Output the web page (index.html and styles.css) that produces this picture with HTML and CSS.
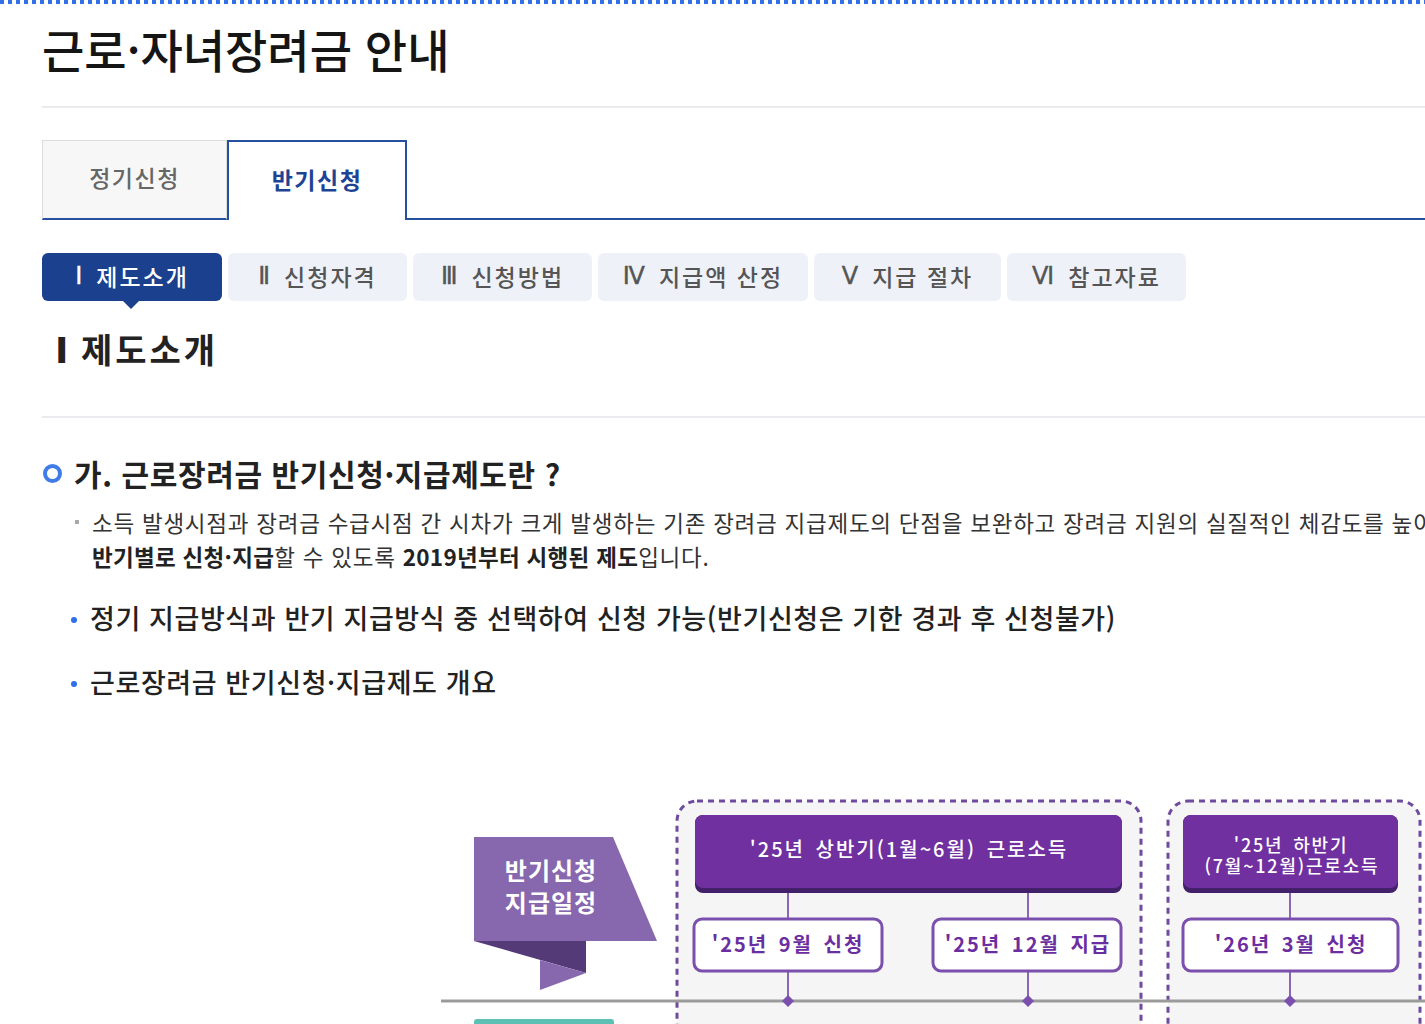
FILE: index.html
```html
<!DOCTYPE html>
<html lang="ko">
<head>
<meta charset="utf-8">
<title>근로·자녀장려금 안내</title>
<link rel="stylesheet" href="styles.css">
</head>
<body>
<div class="topbar"></div>
<div class="page">
  <h1 class="title">근로·자녀장려금 안내</h1>

  <div class="tabs">
    <a class="tab">정기신청</a>
    <a class="tab active">반기신청</a>
    <div class="tab-rest"></div>
  </div>

  <div class="subtabs">
    <a class="subtab active"><span class="num">Ⅰ</span> 제도소개</a>
    <a class="subtab"><span class="num">Ⅱ</span> 신청자격</a>
    <a class="subtab"><span class="num">Ⅲ</span> 신청방법</a>
    <a class="subtab"><span class="num">Ⅳ</span> 지급액 산정</a>
    <a class="subtab"><span class="num">Ⅴ</span> 지급 절차</a>
    <a class="subtab"><span class="num">Ⅵ</span> 참고자료</a>
  </div>

  <h2 class="section-title"><span class="num">Ⅰ</span> 제도소개</h2>

  <h3 class="q-title"><span class="ring"></span>가. 근로장려금 반기신청·지급제도란 ?</h3>
  <p class="desc"><span class="sq"></span>소득 발생시점과 장려금 수급시점 간 시차가 크게 발생하는 기존 장려금 지급제도의 단점을 보완하고 장려금 지원의 실질적인 체감도를 높이기 위해<br><b>반기별로 신청·지급</b>할 수 있도록 <b>2019년부터 시행된 제도</b>입니다.</p>

  <ul class="bullets">
    <li>정기 지급방식과 반기 지급방식 중 선택하여 신청 가능(반기신청은 기한 경과 후 신청불가)</li>
    <li>근로장려금 반기신청·지급제도 개요</li>
  </ul>

  <svg class="diagram" width="1000" height="234" viewBox="441 790 1000 234" xmlns="http://www.w3.org/2000/svg">
    <rect x="677" y="801" width="464" height="262" rx="20" fill="#f5f5f5" stroke="#6e4b9f" stroke-width="3" stroke-dasharray="6 5"/>
    <rect x="1168" y="801" width="252" height="262" rx="20" fill="#f5f5f5" stroke="#6e4b9f" stroke-width="3" stroke-dasharray="6 5"/>

    <polygon points="474,837 613,837 657,941 474,941" fill="#8767ad"/>
    <polygon points="474,941 586,941 586,973" fill="#553a78"/>
    <polygon points="540,960 586,973 540,990" fill="#8767ad"/>
    <text class="rib" x="551" y="880">반기신청</text>
    <text class="rib" x="551" y="912">지급일정</text>

    <line x1="441" y1="1001" x2="1441" y2="1001" stroke="#9b9b9b" stroke-width="3"/>
    <rect x="474" y="1019" width="140" height="20" rx="3" fill="#5cc0b5"/>

    <g stroke="#8b68b6" stroke-width="2">
      <line x1="788" y1="890" x2="788" y2="1001"/>
      <line x1="1028" y1="890" x2="1028" y2="1001"/>
      <line x1="1290" y1="890" x2="1290" y2="1001"/>
    </g>
    <g fill="#7a4fae">
      <polygon points="788,995 794,1001 788,1007 782,1001"/>
      <polygon points="1028,995 1034,1001 1028,1007 1022,1001"/>
      <polygon points="1290,995 1296,1001 1290,1007 1284,1001"/>
    </g>

    <rect x="695" y="815" width="427" height="78" rx="8" fill="#42206a"/>
    <rect x="695" y="815" width="427" height="73" rx="8" fill="#7030a0"/>
    <text class="hd" x="909" y="857">'25년 상반기(1월~6월) 근로소득</text>

    <rect x="1183" y="815" width="215" height="78" rx="8" fill="#42206a"/>
    <rect x="1183" y="815" width="215" height="73" rx="8" fill="#7030a0"/>
    <text class="hd2" x="1291" y="852"><tspan x="1291">'25년 하반기</tspan><tspan x="1292" dy="21">(7월~12월)근로소득</tspan></text>

    <rect x="694" y="919" width="188" height="52" rx="8" fill="#fff" stroke="#7b4fae" stroke-width="3"/>
    <text class="sb" x="788" y="952">'25년 9월 신청</text>
    <rect x="933" y="919" width="188" height="52" rx="8" fill="#fff" stroke="#7b4fae" stroke-width="3"/>
    <text class="sb" x="1028" y="952">'25년 12월 지급</text>
    <rect x="1183" y="919" width="215" height="52" rx="8" fill="#fff" stroke="#7b4fae" stroke-width="3"/>
    <text class="sb" x="1291" y="952">'26년 3월 신청</text>
  </svg>
</div>
</body>
</html>
```

FILE: styles.css
```css
html, body {
  margin: 0;
  padding: 0;
  overflow: hidden;
  background: #fff;
}
body {
  font-family: "Noto Sans CJK KR", "Noto Sans", sans-serif;
  color: #222;
  width: 1425px;
  height: 1024px;
}
.topbar {
  height: 4px;
  background: repeating-linear-gradient(90deg, #3371e9 0 4px, transparent 4px 8px);
}
.page {
  width: 1520px;
  margin-left: 42px;
}
.num {
  font-family: "DejaVu Sans", sans-serif;
  letter-spacing: 0;
}
.title {
  margin: 14px 0 0;
  font-size: 46px;
  font-weight: 500;
  letter-spacing: 0;
  line-height: 60px;
  padding-bottom: 28px;
  border-bottom: 2px solid #ebebef;
  color: #151515;
}
.tabs {
  display: flex;
  height: 80px;
  margin-top: 32px;
}
.tab {
  box-sizing: border-box;
  width: 185px;
  display: flex;
  align-items: center;
  justify-content: center;
  padding-bottom: 5px;
  background: #f7f7f7;
  border: 1px solid #dcdcdc;
  border-bottom: 2px solid #24509e;
  color: #666;
  font-size: 23px;
  font-weight: 500;
  letter-spacing: 1.5px;
}
.tab.active {
  width: 180px;
  background: #fff;
  border: 2px solid #24509e;
  border-bottom: none;
  color: #1d4394;
  font-weight: 700;
}
.tab-rest {
  flex: 1;
  border-bottom: 2px solid #24509e;
}
.subtabs {
  display: flex;
  gap: 6px;
  margin-top: 33px;
}
.subtab {
  position: relative;
  box-sizing: border-box;
  height: 48px;
  padding-bottom: 2px;
  display: flex;
  align-items: center;
  justify-content: center;
  gap: 14px;
  border-radius: 6px;
  background: #eff1f9;
  color: #555;
  font-size: 23px;
  font-weight: 500;
  letter-spacing: 2px;
  white-space: nowrap;
}
.subtab:nth-child(1) { width: 180px; }
.subtab:nth-child(2) { width: 179px; }
.subtab:nth-child(3) { width: 179px; }
.subtab:nth-child(4) { width: 210px; }
.subtab:nth-child(5) { width: 187px; }
.subtab:nth-child(6) { width: 179px; }
.subtab .num {
  font-size: 24px;
  font-weight: 400;
  -webkit-text-stroke: 0.4px currentColor;
}
.subtab.active {
  background: #1b408e;
  color: #fff;
}
.subtab.active::after {
  content: "";
  position: absolute;
  left: 50%;
  bottom: -8px;
  margin-left: -9px;
  border-left: 8px solid transparent;
  border-right: 8px solid transparent;
  border-top: 8px solid #1b408e;
}
.section-title {
  margin: 26px 0 0;
  padding: 0 0 43px 13px;
  font-size: 34px;
  font-weight: 700;
  line-height: 44px;
  letter-spacing: 3px;
  color: #222;
  border-bottom: 2px solid #ebebef;
}
.section-title .num {
  font-size: 36px;
}
.q-title {
  margin: 35px 0 0;
  display: flex;
  align-items: center;
  gap: 12px;
  font-size: 30px;
  font-weight: 700;
  line-height: 40px;
  letter-spacing: 0.6px;
  color: #222;
}
.ring {
  box-sizing: border-box;
  width: 19px;
  height: 19px;
  border-radius: 50%;
  border: 4px solid #3f7ce8;
  flex: none;
  margin-left: 1px;
}
.desc {
  position: relative;
  margin: 12px 0 0;
  padding-left: 50px;
  font-size: 22.5px;
  line-height: 34px;
  color: #333;
  white-space: nowrap;
  letter-spacing: 0.75px;
}
.desc b {
  font-weight: 700;
  color: #222;
  letter-spacing: 0.3px;
}
.sq {
  position: absolute;
  left: 33px;
  top: 15px;
  width: 4px;
  height: 4px;
  background: #a8a8a8;
}
.bullets {
  list-style: none;
  margin: 25px 0 0;
  padding: 0 0 0 48px;
}
.bullets li {
  position: relative;
  font-size: 27px;
  font-weight: 500;
  line-height: 40px;
  color: #222;
  letter-spacing: 0.6px;
  white-space: nowrap;
}
.bullets li + li {
  margin-top: 24px;
}
.bullets li::before {
  content: "";
  position: absolute;
  left: -19px;
  top: 19px;
  width: 6px;
  height: 6px;
  border-radius: 50%;
  background: #2f6fe8;
}
.diagram {
  display: block;
  margin: 88px 0 0 399px;
}
.diagram text {
  font-family: "Noto Sans CJK KR", sans-serif;
  text-anchor: middle;
  font-weight: 700;
}
.diagram .rib {
  fill: #fff;
  font-size: 24px;
  letter-spacing: 1px;
}
.diagram .hd {
  fill: #fff;
  font-size: 20px;
  letter-spacing: 2px;
  word-spacing: 3px;
  font-weight: 500;
}
.diagram .hd2 {
  fill: #fff;
  font-size: 18px;
  letter-spacing: 1.8px;
  word-spacing: 3px;
  font-weight: 500;
}
.diagram .sb {
  fill: #6a2ea0;
  font-size: 20px;
  letter-spacing: 2px;
  word-spacing: 3px;
}
```
